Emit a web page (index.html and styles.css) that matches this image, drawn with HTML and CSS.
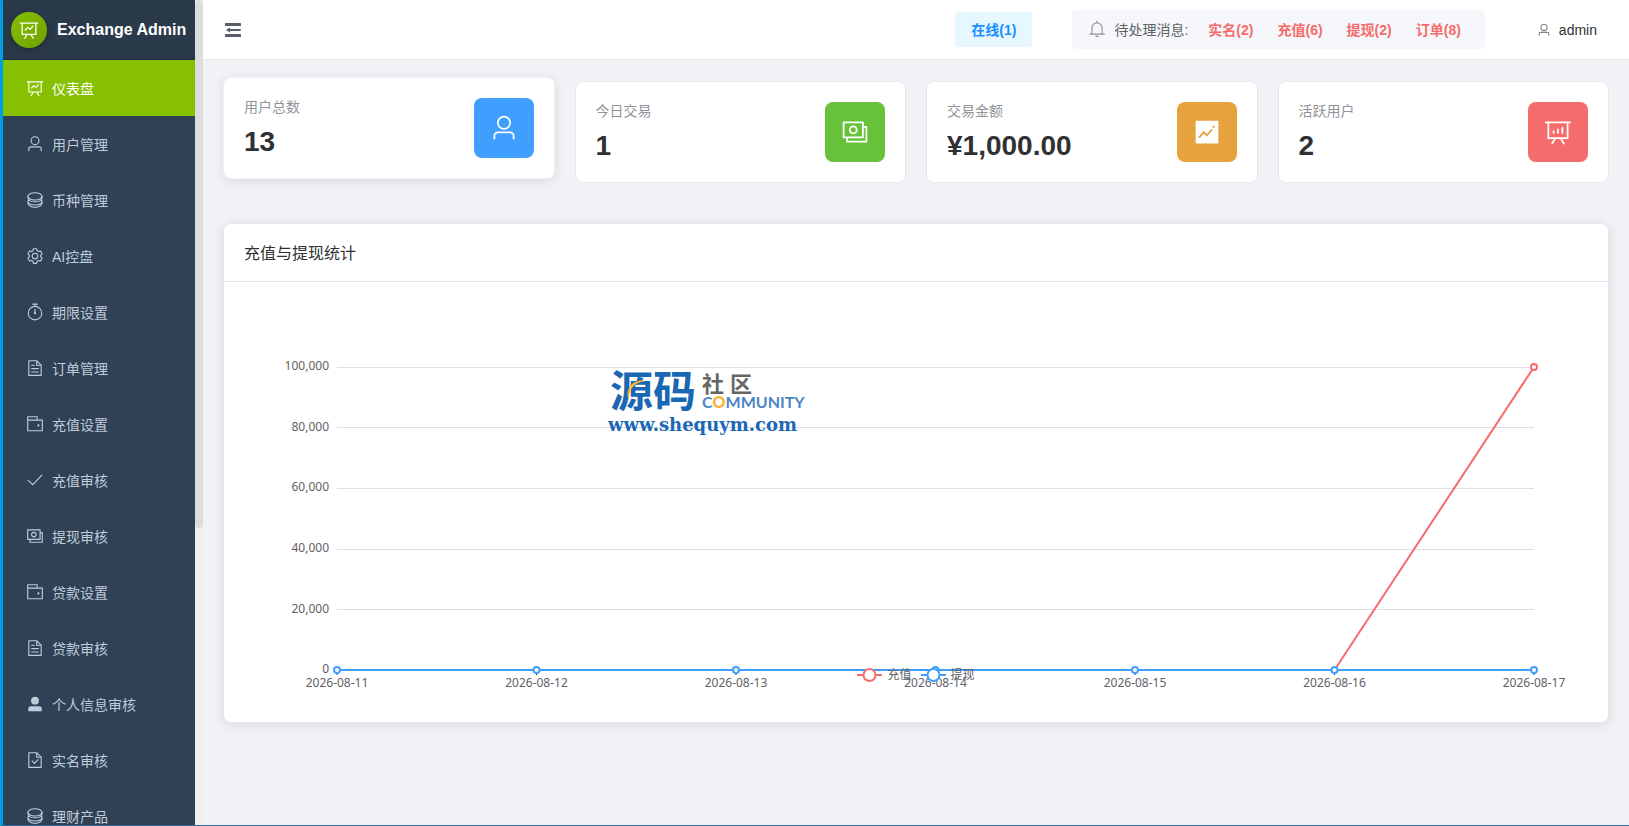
FILE: index.html
```html
<!DOCTYPE html>
<html lang="zh-CN">
<head>
<meta charset="utf-8">
<title>Exchange Admin</title>
<link rel="stylesheet" href="styles.css">
</head>
<body>
<svg class="sprite" aria-hidden="true">
  <symbol id="i-dataline" viewBox="0 0 1024 1024"><path fill="currentColor" d="M359.168 768H160a32 32 0 0 1-32-32V192H64a32 32 0 0 1 0-64h896a32 32 0 1 1 0 64h-64v544a32 32 0 0 1-32 32H665.216l110.848 192h-73.856L591.36 768H433.024L322.176 960H248.32zM832 192H192v512h640zM342.656 534.656a32 32 0 1 1-45.312-45.312L444.992 341.76l125.44 94.08L679.04 300.032a32 32 0 1 1 49.92 39.936L581.632 524.224 451.008 426.24 342.656 534.592z"/></symbol>
  <symbol id="i-analysis" viewBox="0 0 1024 1024"><path fill="currentColor" d="M359.168 768H160a32 32 0 0 1-32-32V192H64a32 32 0 0 1 0-64h896a32 32 0 1 1 0 64h-64v544a32 32 0 0 1-32 32H665.216l110.848 192h-73.856L591.36 768H433.024L322.176 960H248.32zM832 192H192v512h640zM352 448a32 32 0 0 1 32 32v64a32 32 0 0 1-64 0v-64a32 32 0 0 1 32-32m160-64a32 32 0 0 1 32 32v128a32 32 0 0 1-64 0V416a32 32 0 0 1 32-32m160-64a32 32 0 0 1 32 32v192a32 32 0 1 1-64 0V352a32 32 0 0 1 32-32"/></symbol>
  <symbol id="i-user" viewBox="0 0 1024 1024"><path fill="currentColor" d="M512 512a192 192 0 1 0 0-384 192 192 0 0 0 0 384m0 64a256 256 0 1 1 0-512 256 256 0 0 1 0 512m320 320v-96a96 96 0 0 0-96-96H288a96 96 0 0 0-96 96v96a32 32 0 1 1-64 0v-96a160 160 0 0 1 160-160h448a160 160 0 0 1 160 160v96a32 32 0 1 1-64 0"/></symbol>
  <symbol id="i-userfill" viewBox="0 0 1024 1024"><path fill="currentColor" d="M288 320a224 224 0 1 0 448 0 224 224 0 1 0-448 0m544 608H160a32 32 0 0 1-32-32v-96a160 160 0 0 1 160-160h448a160 160 0 0 1 160 160v96a32 32 0 0 1-32 32z"/></symbol>
  <symbol id="i-coin" viewBox="0 0 1024 1024"><g fill="none" stroke="currentColor" stroke-width="64"><ellipse cx="512" cy="304" rx="400" ry="208"/><path d="M112 304v60c0 20 0 60 40 148M912 304v60c0 20 0 60-40 148M128 448a396 216 0 0 0 768 0M152 512c-40 40-40 60-40 92v72a400 252 0 0 0 800 0v-72c0-32 0-52-40-92M118 620a400 216 0 0 0 788 0"/></g></symbol>
  <symbol id="i-setting" viewBox="0 0 1024 1024"><path fill="currentColor" d="M600.704 64a32 32 0 0 1 30.464 22.208l35.2 109.376c14.784 7.232 28.928 15.36 42.432 24.512l112.384-24.192a32 32 0 0 1 34.432 15.36L944.32 364.8a32 32 0 0 1-4.032 37.504l-77.12 85.12a357.12 357.12 0 0 1 0 49.024l77.12 85.248a32 32 0 0 1 4.032 37.504l-88.704 153.6a32 32 0 0 1-34.432 15.296L708.8 803.904c-13.44 9.088-27.648 17.28-42.368 24.512l-35.264 109.376A32 32 0 0 1 600.704 960H423.296a32 32 0 0 1-30.464-22.208L357.696 828.48a351.616 351.616 0 0 1-42.56-24.64l-112.32 24.256a32 32 0 0 1-34.432-15.36L79.68 659.2a32 32 0 0 1 4.032-37.504l77.12-85.248a357.12 357.12 0 0 1 0-48.896l-77.12-85.248A32 32 0 0 1 79.68 364.8l88.704-153.6a32 32 0 0 1 34.432-15.296l112.32 24.256c13.568-9.152 27.776-17.408 42.56-24.64l35.2-109.312A32 32 0 0 1 423.232 64H600.64zm-23.424 64H446.72l-36.352 113.088-24.512 11.968a294.113 294.113 0 0 0-34.816 20.096l-22.656 15.36-116.224-25.088-65.28 113.152 79.68 88.192-1.92 27.136a293.12 293.12 0 0 0 0 40.192l1.92 27.136-79.808 88.192 65.344 113.152 116.224-25.024 22.656 15.296a294.113 294.113 0 0 0 34.816 20.096l24.512 11.968L446.72 896h130.688l36.48-113.152 24.448-11.904a288.282 288.282 0 0 0 34.752-20.096l22.592-15.296 116.288 25.024 65.28-113.152-79.744-88.192 1.92-27.136a293.12 293.12 0 0 0 0-40.256l-1.92-27.136 79.808-88.128-65.344-113.152-116.288 24.96-22.592-15.232a287.616 287.616 0 0 0-34.752-20.096l-24.448-11.904L577.344 128zM512 320a192 192 0 1 1 0 384 192 192 0 0 1 0-384m0 64a128 128 0 1 0 0 256 128 128 0 0 0 0-256"/></symbol>
  <symbol id="i-timer" viewBox="0 0 1024 1024"><g fill="none" stroke="currentColor" stroke-width="64" stroke-linecap="round"><circle cx="512" cy="576" r="384"/><path d="M512 352v224M384 64h256M512 64v128"/></g><circle cx="512" cy="576" r="64" fill="currentColor"/></symbol>
  <symbol id="i-doc" viewBox="0 0 1024 1024"><path fill="none" stroke="currentColor" stroke-width="64" stroke-linecap="round" stroke-linejoin="round" d="M160 96h448l256 256v576H160zM608 96v256h256M320 352h160M320 544h384M320 736h384"/></symbol>
  <symbol id="i-docok" viewBox="0 0 1024 1024"><path fill="none" stroke="currentColor" stroke-width="64" stroke-linejoin="round" d="M160 96h448l256 256v576H160zM608 96v256h256M330 550l150 150 226-226"/></symbol>
  <symbol id="i-wallet" viewBox="0 0 1024 1024"><path fill="none" stroke="currentColor" stroke-width="64" stroke-linejoin="round" d="M640 288V96H96v192M96 288h832v608H96z"/><circle cx="704" cy="592" r="64" fill="currentColor"/></symbol>
  <symbol id="i-check" viewBox="0 0 1024 1024"><path fill="none" stroke="currentColor" stroke-width="64" stroke-linecap="round" d="M126 536l262 240 510-540"/></symbol>
  <symbol id="i-money" viewBox="0 0 1024 1024"><g fill="none" stroke="currentColor" stroke-width="64" stroke-linejoin="round"><path d="M96 160h704v544H96zM224 704v160h704V320H800"/><circle cx="448" cy="432" r="128"/></g></symbol>
  <symbol id="i-trend" viewBox="0 0 1024 1024"><path fill="currentColor" fill-rule="evenodd" d="M128 96h768a32 32 0 0 1 32 32v768a32 32 0 0 1-32 32H128a32 32 0 0 1-32-32V128a32 32 0 0 1 32-32z"/><path fill="none" stroke="#e6a23c" stroke-width="64" stroke-linecap="round" d="M236 700l150-176 128 106 160-190M746 330l20-18"/></symbol>
  <symbol id="i-bell" viewBox="0 0 1024 1024"><path fill="none" stroke="currentColor" stroke-width="64" stroke-linecap="round" d="M224 768V448a288 288 0 0 1 576 0v320M96 800h832M512 64v96M448 928h128"/></symbol>
  <symbol id="i-fold" viewBox="0 0 16 14"><path fill="currentColor" d="M1 0h14a1 1 0 0 1 0 3H1a1 1 0 0 1 0-3zM5 6h10a1 1 0 0 1 0 2H5v1.500L1 7l4-2.500zM1 11h14a1 1 0 0 1 0 3H1a1 1 0 0 1 0-3z"/></symbol>
</svg>

<div class="app">
  <div class="side-wrap">
    <aside class="sidebar">
      <div class="brand">
        <span class="brand-mark"><svg><use href="#i-dataline"/></svg></span>
        <span class="brand-name">Exchange Admin</span>
      </div>
      <nav class="menu">
        <a href="#" class="item active"><svg><use href="#i-dataline"/></svg>仪表盘</a>
        <a href="#" class="item"><svg><use href="#i-user"/></svg>用户管理</a>
        <a href="#" class="item"><svg><use href="#i-coin"/></svg>币种管理</a>
        <a href="#" class="item"><svg><use href="#i-setting"/></svg>AI控盘</a>
        <a href="#" class="item"><svg><use href="#i-timer"/></svg>期限设置</a>
        <a href="#" class="item"><svg><use href="#i-doc"/></svg>订单管理</a>
        <a href="#" class="item"><svg><use href="#i-wallet"/></svg>充值设置</a>
        <a href="#" class="item"><svg><use href="#i-check"/></svg>充值审核</a>
        <a href="#" class="item"><svg><use href="#i-money"/></svg>提现审核</a>
        <a href="#" class="item"><svg><use href="#i-wallet"/></svg>贷款设置</a>
        <a href="#" class="item"><svg><use href="#i-doc"/></svg>贷款审核</a>
        <a href="#" class="item"><svg><use href="#i-userfill"/></svg>个人信息审核</a>
        <a href="#" class="item"><svg><use href="#i-docok"/></svg>实名审核</a>
        <a href="#" class="item"><svg><use href="#i-coin"/></svg>理财产品</a>
      </nav>
    </aside>
    <div class="track"><div class="thumb"></div></div>
  </div>

  <div class="main">
    <header class="topbar">
      <button class="fold" aria-label="折叠菜单"><svg><use href="#i-fold"/></svg></button>
      <div class="top-right">
        <button class="online">在线(1)</button>
        <div class="pending">
          <svg class="bell"><use href="#i-bell"/></svg>
          <span class="pending-label">待处理消息:</span>
          <a href="#">实名(2)</a>
          <a href="#">充值(6)</a>
          <a href="#">提现(2)</a>
          <a href="#">订单(8)</a>
        </div>
        <button class="account"><svg><use href="#i-user"/></svg>admin</button>
      </div>
    </header>

    <main class="content">
      <section class="stats">
        <article class="stat raised">
          <div class="stat-text"><span class="stat-label">用户总数</span><strong class="stat-value">13</strong></div>
          <span class="stat-icon blue"><svg><use href="#i-user"/></svg></span>
        </article>
        <article class="stat">
          <div class="stat-text"><span class="stat-label">今日交易</span><strong class="stat-value">1</strong></div>
          <span class="stat-icon green"><svg><use href="#i-money"/></svg></span>
        </article>
        <article class="stat">
          <div class="stat-text"><span class="stat-label">交易金额</span><strong class="stat-value">¥1,000.00</strong></div>
          <span class="stat-icon orange"><svg><use href="#i-trend"/></svg></span>
        </article>
        <article class="stat">
          <div class="stat-text"><span class="stat-label">活跃用户</span><strong class="stat-value">2</strong></div>
          <span class="stat-icon red"><svg><use href="#i-analysis"/></svg></span>
        </article>
      </section>

      <section class="panel">
        <h2 class="panel-head">充值与提现统计</h2>
        <div class="chart">
          <svg class="plot" role="img" aria-label="充值与提现统计">
            <g class="grid">
              <line x1="0" x2="100%" y1="65.500" y2="65.500"/>
              <line x1="0" x2="100%" y1="125.500" y2="125.500"/>
              <line x1="0" x2="100%" y1="186.500" y2="186.500"/>
              <line x1="0" x2="100%" y1="247.500" y2="247.500"/>
              <line x1="0" x2="100%" y1="307.500" y2="307.500"/>
            </g>
            <g class="ticks">
              <line x1="0" x2="0" y1="368" y2="373"/>
              <line x1="16.667%" x2="16.667%" y1="368" y2="373"/>
              <line x1="33.333%" x2="33.333%" y1="368" y2="373"/>
              <line x1="50%" x2="50%" y1="368" y2="373"/>
              <line x1="66.667%" x2="66.667%" y1="368" y2="373"/>
              <line x1="83.333%" x2="83.333%" y1="368" y2="373"/>
              <line x1="100%" x2="100%" y1="368" y2="373"/>
            </g>
            <g class="y-labels">
              <text x="-8" y="68">100,000</text>
              <text x="-8" y="129">80,000</text>
              <text x="-8" y="189">60,000</text>
              <text x="-8" y="250">40,000</text>
              <text x="-8" y="311">20,000</text>
              <text x="-8" y="371">0</text>
            </g>
            <g class="x-labels">
              <text x="0" y="385">2026-08-11</text>
              <text x="16.667%" y="385">2026-08-12</text>
              <text x="33.333%" y="385">2026-08-13</text>
              <text x="50%" y="385">2026-08-14</text>
              <text x="66.667%" y="385">2026-08-15</text>
              <text x="83.333%" y="385">2026-08-16</text>
              <text x="100%" y="385">2026-08-17</text>
            </g>
            <g class="series deposit">
              <line x1="0" x2="83.333%" y1="368" y2="368"/>
              <line x1="83.333%" x2="100%" y1="368" y2="65"/>
              <circle cx="100%" cy="65" r="3"/>
            </g>
            <g class="series withdraw">
              <line x1="0" x2="100%" y1="368" y2="368"/>
              <circle cx="0" cy="368" r="3"/>
              <circle cx="16.667%" cy="368" r="3"/>
              <circle cx="33.333%" cy="368" r="3"/>
              <circle cx="50%" cy="368" r="3"/>
              <circle cx="66.667%" cy="368" r="3"/>
              <circle cx="83.333%" cy="368" r="3"/>
              <circle cx="100%" cy="368" r="3"/>
            </g>
          </svg>
          <div class="legend">
            <span class="key"><svg class="series deposit"><line x1="0" x2="25" y1="7" y2="7"/><circle cx="12.500" cy="7" r="6"/></svg>充值</span>
            <span class="key"><svg class="series withdraw"><line x1="0" x2="25" y1="7" y2="7"/><circle cx="12.500" cy="7" r="6"/></svg>提现</span>
          </div>
          <div class="watermark">
            <div class="wm-top">
              <span class="wm-big">源码<svg class="wm-arc" viewBox="0 0 24 24"><path d="M22 3C10 0 0 10 5 23C4 12 10 4 22 3Z"/></svg></span>
              <span class="wm-side"><span class="wm-cn"><span>社</span><span>区</span></span><span class="wm-en">C<b>O</b>MMUNITY</span></span>
            </div>
            <div class="wm-url">www.shequym.com</div>
          </div>
        </div>
      </section>
    </main>
  </div>
</div>
</body>
</html>
```

FILE: styles.css
```css
* { box-sizing: border-box; }

body {
  margin: 0;
  font-family: "Liberation Sans", "Noto Sans CJK SC", sans-serif;
  font-size: 14px;
  color: #303133;
  background: #f0f2f5;
}

a { color: inherit; text-decoration: none; }

button {
  font: inherit;
  color: inherit;
  border: 0;
  padding: 0;
  background: none;
  cursor: pointer;
}

.sprite { position: absolute; width: 0; height: 0; }

.app {
  display: flex;
  height: 100vh;
  overflow: hidden;
  border-left: 3px solid #009fe3;
  border-bottom: 1px solid #2b6ca3;
}

/* Sidebar */
.side-wrap { display: flex; flex: none; }

.sidebar {
  width: 192px;
  overflow: hidden;
  background: #304156;
}

.track { width: 8px; background: #f0f0f0; }
.thumb { height: 64%; border-radius: 4px; background: #dddddd; }

.brand {
  display: flex;
  align-items: center;
  gap: 10px;
  height: 60px;
  padding-left: 8px;
  background: #2b3a4a;
  border-bottom: 1px solid #1f2d3d;
}

.brand-mark {
  display: grid;
  place-items: center;
  width: 36px;
  height: 36px;
  border-radius: 50%;
  color: #fff;
  background: linear-gradient(135deg, #86c000, #6fa000);
  box-shadow: 0 2px 8px rgba(0, 0, 0, 0.3);
}

.brand-mark svg { width: 20px; height: 20px; }

.brand-name {
  font-size: 16px;
  font-weight: 700;
  color: #fff;
  white-space: nowrap;
}

.item {
  display: flex;
  align-items: center;
  gap: 8px;
  height: 56px;
  padding: 0 0 1px 23px;
  color: #bfcbd9;
}

.item svg { width: 18px; height: 18px; }
.item.active { color: #fff; background: #86c000; }

/* Top bar */
.main {
  display: flex;
  flex-direction: column;
  flex: 1;
  min-width: 0;
}

.topbar {
  display: flex;
  align-items: center;
  justify-content: space-between;
  height: 60px;
  padding: 0 32px 0 22px;
  background: #fff;
  border-bottom: 1px solid #e6e6e6;
}

.fold { color: #5a5e66; }
.fold svg { display: block; width: 16px; height: 14px; }

.top-right { display: flex; align-items: center; }

.online {
  height: 35px;
  margin-right: 40px;
  padding: 0 16px 2px;
  border-radius: 4px;
  font-weight: 700;
  color: #1890ff;
  background: #e6f7ff;
}

.pending {
  display: flex;
  align-items: center;
  gap: 24px;
  height: 39px;
  padding: 0 24px 2px 16px;
  margin-right: 52px;
  border-radius: 4px;
  background: #f5f7fa;
}

.pending a { font-weight: 700; color: #f56c6c; }
.pending-label { margin: 0 -4px 0 -16px; color: #606266; }
.bell { width: 18px; height: 18px; color: #909399; }

.account { display: flex; align-items: center; gap: 8px; }
.account svg { width: 14px; height: 14px; color: #606266; }

/* Stat cards */
.content { flex: 1; padding: 21px 20px; }

.stats {
  display: grid;
  grid-template-columns: repeat(4, 1fr);
  gap: 20px;
  margin-bottom: 40px;
}

.stat {
  display: flex;
  justify-content: space-between;
  padding: 20px;
  border: 1px solid #e4e7ed;
  border-radius: 8px;
  background: #fff;
}

.raised {
  transform: translateY(-4px);
  border-color: #f2f3f6;
  box-shadow: 0 2px 12px rgba(0, 0, 0, 0.1);
}

.stat-text { display: flex; flex-direction: column; gap: 10px; }
.stat-label { line-height: 18px; color: #909399; }
.stat-value { font-size: 28px; line-height: 32px; }

.stat-icon {
  display: grid;
  place-items: center;
  width: 60px;
  height: 60px;
  border-radius: 8px;
  color: #fff;
}

.stat-icon svg { width: 28px; height: 28px; }
.blue { background: #409eff; }
.green { background: #67c23a; }
.orange { background: #e6a23c; }
.red { background: #f56c6c; }

/* Chart panel */
.panel {
  border: 1px solid #e4e7ed;
  border-radius: 8px;
  background: #fff;
  box-shadow: 0 2px 12px rgba(0, 0, 0, 0.1);
}

.panel-head {
  margin: 0;
  padding: 20px 20px 17px;
  border-bottom: 1px solid #e4e7ed;
  font-size: 16px;
  font-weight: 400;
  line-height: 20px;
}

.chart {
  position: relative;
  height: 440px;
  padding: 20px 74px 20px 113px;
  font-family: "Noto Sans", "Noto Sans CJK SC", sans-serif;
  font-size: 12px;
}

.plot {
  display: block;
  width: 100%;
  height: 400px;
  overflow: visible;
}

.plot text { fill: #606266; }
.grid line { stroke: #dcdfe6; }
.ticks line { stroke: #303133; }
.y-labels { text-anchor: end; }
.x-labels { text-anchor: middle; }

.series { fill: #fff; stroke-width: 2; }
.deposit { stroke: #f56c6c; }
.withdraw { stroke: #409eff; }

.legend {
  position: absolute;
  left: 0;
  right: 0;
  top: 384px;
  display: flex;
  justify-content: center;
  gap: 9px;
  line-height: 18px;
  color: #606266;
}

.key { display: flex; align-items: center; gap: 5px; }
.key svg { width: 25px; height: 14px; }

.watermark {
  position: absolute;
  left: 384px;
  top: 88px;
  color: #1a67b3;
}

.wm-top {
  display: flex;
  align-items: center;
  gap: 6px;
  padding-left: 2px;
}

.wm-big {
  position: relative;
  font-size: 43px;
  font-weight: 700;
  line-height: 42px;
}

.wm-arc {
  position: absolute;
  left: 14px;
  top: 6px;
  width: 24px;
  height: 28px;
  fill: #f7b52c;
}

.wm-side { display: flex; flex-direction: column; }

.wm-cn {
  display: flex;
  gap: 6px;
  font-size: 22px;
  font-weight: 700;
  line-height: 22px;
  color: #666;
}

.wm-en {
  font-family: Lato, sans-serif;
  font-size: 16px;
  font-weight: 700;
  line-height: 16px;
  color: #4a86c5;
}

.wm-en b { color: #f7b52c; }

.wm-url {
  font-family: "DejaVu Serif", serif;
  font-size: 18px;
  font-weight: 700;
  line-height: 26px;
}
```
